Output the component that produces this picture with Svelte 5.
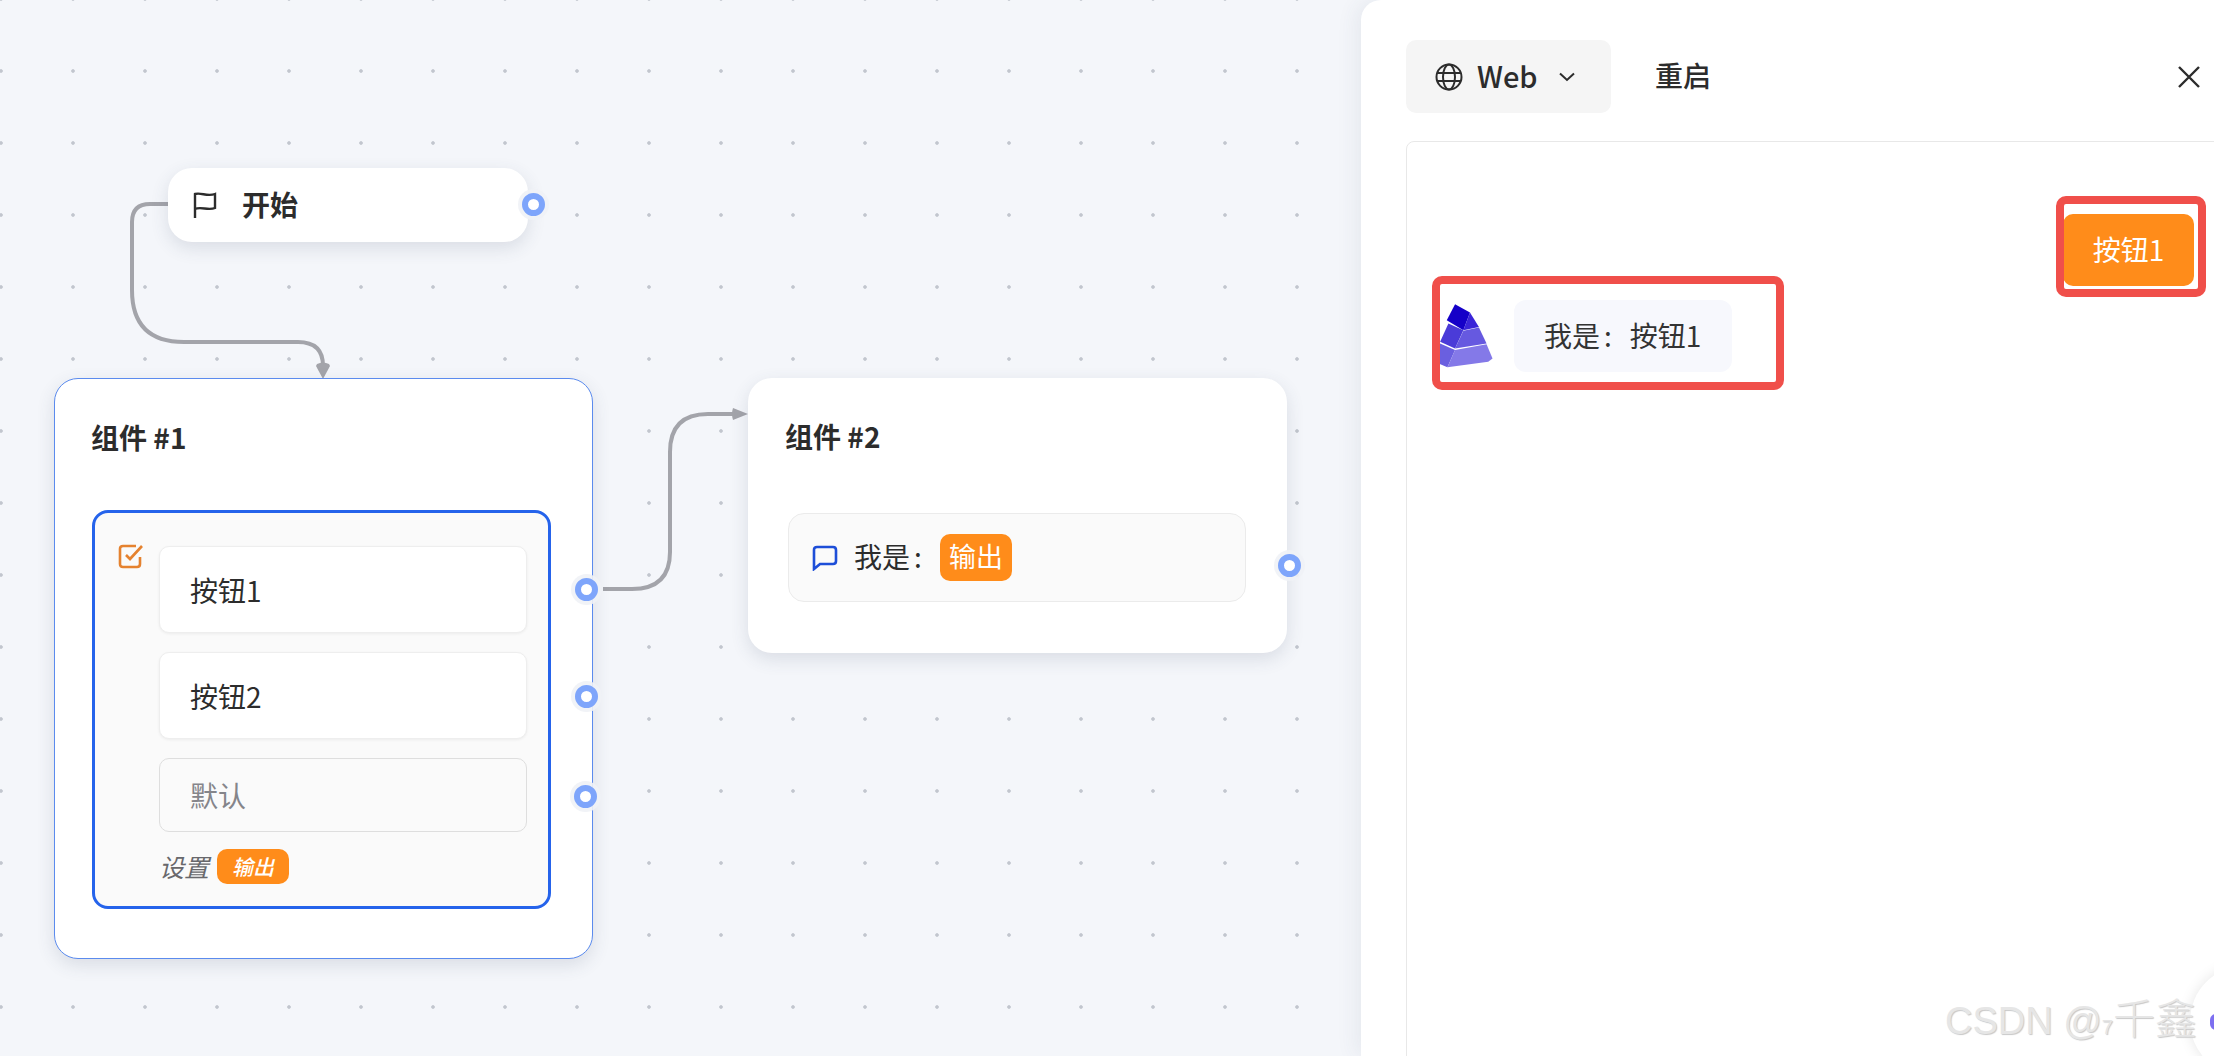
<script>
  const branches = ['按钮1', '按钮2'];
</script>

<div class="page">
  <section class="canvas">
    <svg class="edges" width="1361" height="1056" viewBox="0 0 1361 1056">
      <path d="M168 204 H150 Q132 204 132 222 V290 Q132 342 184 342 H298 Q323 342 323 366" />
      <path class="tip" d="M317 364 Q323 361 329 364 L330 366 L323 379 L316 366 Z" />
      <path d="M603 589 H632 Q670 589 670 552 V452 Q670 414 708 414 H734" />
      <path class="tip" d="M733 408 Q731 414 733 420 L748 414 Z" />
    </svg>

    <article class="node start">
      <svg class="flag" width="24" height="28" viewBox="0 0 24 28" fill="none">
        <path d="M2 27 V3 C8 1 14 6 22 3 V17 C15 20 8 15 2 18" />
      </svg>
      <span>开始</span>
      <i class="handle"></i>
    </article>

    <article class="node first">
      <h3>组件 #1</h3>
      <div class="group">
        <svg class="check" width="26" height="25" viewBox="0 0 26 25" fill="none">
          <path d="M22 13 V20 Q22 23 19 23 H5 Q2 23 2 20 V5 Q2 2 5 2 H18" />
          <path d="M8 11 L12 15 L24 2" />
        </svg>
        <div class="options">
          {#each branches as label}
            <div class="option">{label}</div>
          {/each}
          <div class="option fallback">默认</div>
          <div class="setting">设置 <b>输出</b></div>
        </div>
      </div>
      <i class="handle h1"></i>
      <i class="handle h2"></i>
      <i class="handle h3"></i>
    </article>

    <article class="node second">
      <h3>组件 #2</h3>
      <div class="reply">
        <svg class="bubble-icon" width="26" height="26" viewBox="0 0 26 26" fill="none">
          <path d="M2 24 V5 Q2 2 5 2 H21 Q24 2 24 5 V16 Q24 19 21 19 H8 Z" />
        </svg>
        <span>我是<i class="colon">:</i></span>
        <b>输出</b>
      </div>
      <i class="handle h4"></i>
    </article>
  </section>

  <aside class="panel">
    <header>
      <button class="platform">
        <svg width="28" height="28" viewBox="0 0 28 28" fill="none">
          <circle cx="14" cy="14" r="12.5" />
          <ellipse cx="14" cy="14" rx="6" ry="12.5" />
          <path d="M2 10 H26 M2 18 H26" />
        </svg>
        <span>Web</span>
        <svg class="chev" width="18" height="10" viewBox="0 0 18 10" fill="none">
          <path d="M2 1.5 L9 8 L16 1.5" />
        </svg>
      </button>
      <button class="restart">重启</button>
      <svg class="close" width="22" height="22" viewBox="0 0 22 22" fill="none">
        <path d="M1 1 L21 21 M21 1 L1 21" />
      </svg>
    </header>

    <div class="chat">
      <div class="user-msg">按钮1</div>
      <div class="bot-msg">
        <svg class="avatar" width="60" height="68" viewBox="45 365 180 205">
          <path fill="#4a3bd8" d="M85 430 L130 450 L105 505 L60 485 Z" />
          <path fill="#6659e0" d="M130 452 L177 442 L200 490 L105 505 Z" />
          <path fill="#6a5fe0" d="M60 490 L105 510 L82 562 L50 548 Z" />
          <path fill="#8479e8" d="M105 510 L200 492 L218 535 L205 545 L82 562 Z" />
          <path fill="#1500c8" d="M105 372 L150 397 L130 450 L80 420 Z" />
          <path fill="#3a25d8" d="M150 397 L177 440 L130 450 Z" />
        </svg>
        <div class="bubble">我是<i class="colon wide">:</i>按钮1</div>
      </div>
    </div>

    <div class="mark mark-user"></div>
    <div class="mark mark-bot"></div>
    <div class="fab"></div>
    <div class="watermark">CSDN @<small>7</small><em>千鑫</em></div>
  </aside>
</div>

<style>
  :global(body) {
    margin: 0;
    background: #f4f6fa;
  }

  .page {
    display: flex;
    width: 2214px;
    height: 1056px;
    overflow: hidden;
    font-family: "Noto Sans CJK SC", "Noto Sans", sans-serif;
    color: #2c2c2c;
  }

  .canvas {
    position: relative;
    flex: 0 0 1361px;
    background-color: #f4f6fa;
    background-image: radial-gradient(circle, #c2c6ce 1.4px, transparent 2.2px);
    background-size: 72px 72px;
    background-position: -35px -37px;
  }

  .edges {
    position: absolute;
    inset: 0;
  }

  .edges path {
    fill: none;
    stroke: #a3a4aa;
    stroke-width: 4;
  }

  .edges .tip {
    fill: #a3a4aa;
    stroke: none;
  }

  .node {
    position: absolute;
    box-sizing: border-box;
    background: #fff;
    border-radius: 24px;
    box-shadow: 0 6px 18px rgba(60, 70, 100, 0.14);
  }

  .node h3 {
    margin: 0;
    font-size: 28px;
    line-height: 36px;
    font-weight: 600;
  }

  .start {
    left: 168px;
    top: 168px;
    width: 360px;
    height: 74px;
    display: flex;
    align-items: center;
    gap: 26px;
    padding-left: 25px;
    font-size: 28px;
    font-weight: 600;
  }

  .start span {
    margin: -3px 0 0 -1px;
  }

  .flag path {
    stroke: #2c2c2c;
    stroke-width: 2.4;
  }

  .first {
    left: 54px;
    top: 378px;
    width: 539px;
    height: 581px;
    padding: 40px 36px;
    border: 1.5px solid #5b8bee;
  }

  .group {
    display: flex;
    gap: 15px;
    box-sizing: border-box;
    width: 459px;
    height: 399px;
    margin: 55px 0 0 1px;
    padding: 31px 21px 0 23px;
    background: #fafafa;
    border: 3px solid #2563eb;
    border-radius: 16px;
  }

  .check {
    flex: none;
  }

  .check path {
    stroke: #e5822f;
    stroke-width: 2.6;
  }

  .options {
    flex: 1;
    display: flex;
    flex-direction: column;
    gap: 19px;
    margin-top: 2px;
  }

  .option {
    box-sizing: border-box;
    height: 87px;
    display: flex;
    align-items: center;
    padding-left: 30px;
    background: #fff;
    border: 1px solid #eeeeee;
    border-radius: 10px;
    box-shadow: 0 1px 3px rgba(0, 0, 0, 0.06);
    font-size: 28px;
  }

  .fallback {
    height: 74px;
    background: #fafafa;
    border-color: #dedede;
    box-shadow: none;
    color: #85858a;
  }

  .setting {
    display: flex;
    align-items: center;
    gap: 8px;
    margin-top: -2px;
    font-size: 25px;
    font-style: italic;
    color: #68686c;
    line-height: 35px;
  }

  .setting b {
    width: 72px;
    height: 35px;
    text-align: center;
    background: #ff8c1a;
    border-radius: 10px;
    color: #fff;
    font-size: 21px;
    font-weight: 500;
  }

  .second {
    left: 748px;
    top: 378px;
    width: 539px;
    height: 275px;
    padding: 40px 37px;
  }

  .reply {
    box-sizing: border-box;
    display: flex;
    align-items: center;
    width: 458px;
    height: 89px;
    margin: 59px 0 0 3px;
    padding-left: 23px;
    background: #fafafa;
    border: 1px solid #ebebeb;
    border-radius: 16px;
    font-size: 28px;
  }

  .bubble-icon {
    margin-right: 16px;
  }

  .bubble-icon path {
    stroke: #1d4ed8;
    stroke-width: 2.6;
  }

  .reply span {
    width: 86px;
    margin-top: -3px;
  }

  .colon {
    margin-left: 4px;
    font-style: normal;
  }

  .colon.wide {
    margin-right: 18px;
  }

  .reply b {
    width: 72px;
    height: 47px;
    line-height: 44px;
    text-align: center;
    background: #ff8c1a;
    border-radius: 10px;
    color: #fff;
    font-size: 27px;
    font-weight: 400;
  }

  .handle {
    position: absolute;
    box-sizing: border-box;
    left: 354px;
    top: 25px;
    width: 23px;
    height: 23px;
    background: #fff;
    border: 6px solid #7ea5fb;
    border-radius: 50%;
    box-shadow: 0 0 0 4px rgba(240, 242, 246, 0.9);
  }

  .h1 { left: 520px; top: 199px; }
  .h2 { left: 520px; top: 306px; }
  .h3 { left: 519px; top: 406px; }
  .h4 { left: 530px; top: 176px; }

  .panel {
    position: relative;
    flex: 1;
    box-sizing: border-box;
    padding: 40px 0 0 45px;
    background: #fff;
    border-radius: 20px 0 0 0;
    box-shadow: -6px 0 20px rgba(60, 70, 100, 0.07);
    overflow: hidden;
  }

  header {
    display: flex;
    align-items: center;
    height: 73px;
    padding-right: 14px;
  }

  header button {
    border: 0;
    font: inherit;
    color: #2c2c2c;
    font-size: 28px;
    font-weight: 500;
    background: none;
    line-height: 1;
  }

  .platform {
    display: flex;
    align-items: center;
    gap: 14px;
    width: 205px;
    height: 73px;
    padding: 0 0 0 29px;
    background: #f5f5f5 !important;
    border-radius: 10px;
  }

  .platform span {
    margin-top: -3px;
    font-size: 29px;
  }

  .platform circle,
  .platform ellipse,
  .platform path {
    stroke: #2c2c2c;
    stroke-width: 2;
  }

  .chev {
    margin-left: 6px;
  }

  .restart {
    margin: -3px 0 0 44px;
    padding: 0;
  }

  .close {
    margin-left: auto;
  }

  .close path {
    stroke: #2c2c2c;
    stroke-width: 2.4;
  }

  .chat {
    box-sizing: border-box;
    width: 840px;
    height: 960px;
    margin-top: 28px;
    padding: 72px 51px 0 28px;
    background: #fff;
    border: 1px solid #e8e8e8;
    border-radius: 8px;
  }

  .user-msg {
    width: 131px;
    height: 72px;
    margin-left: auto;
    line-height: 70px;
    text-align: center;
    background: #ff8c1a;
    border-radius: 10px;
    color: #fff;
    font-size: 28px;
  }

  .bot-msg {
    display: flex;
    align-items: flex-start;
    gap: 19px;
    margin-top: 14px;
  }

  .avatar {
    flex: none;
    margin-top: 2px;
  }

  .bubble {
    width: 218px;
    box-sizing: border-box;
    padding-left: 30px;
    height: 72px;
    line-height: 70px;
    background: #f7f8fd;
    border-radius: 12px;
    font-size: 28px;
    color: #333;
    white-space: nowrap;
  }

  .mark {
    position: absolute;
    box-sizing: border-box;
    border: 8px solid #f04f4a;
    border-radius: 10px;
  }

  .mark-user {
    left: 695px;
    top: 196px;
    width: 150px;
    height: 101px;
  }

  .mark-bot {
    left: 71px;
    top: 276px;
    width: 352px;
    height: 114px;
  }

  .fab {
    position: absolute;
    left: 829px;
    top: 966px;
    width: 110px;
    height: 110px;
    background: #fff;
    border-radius: 50%;
    box-shadow: 0 0 14px rgba(0, 0, 0, 0.1);
  }

  .fab::after {
    content: "";
    position: absolute;
    left: 20px;
    top: 48px;
    width: 12px;
    height: 16px;
    background: #7d6ff0;
    border-radius: 6px 0 0 6px;
  }

  .watermark {
    position: absolute;
    left: 584px;
    top: 990px;
    font-family: "Liberation Sans", "Noto Sans CJK SC", sans-serif;
    font-size: 38px;
    line-height: 60px;
    white-space: nowrap;
    color: #e6e6e6;
    text-shadow: 1px 1px 1px #c8c8c8;
  }

  .watermark small {
    font-size: 20px;
  }

  .watermark em {
    font-style: normal;
    font-size: 42px;
    font-weight: 300;
  }
</style>
